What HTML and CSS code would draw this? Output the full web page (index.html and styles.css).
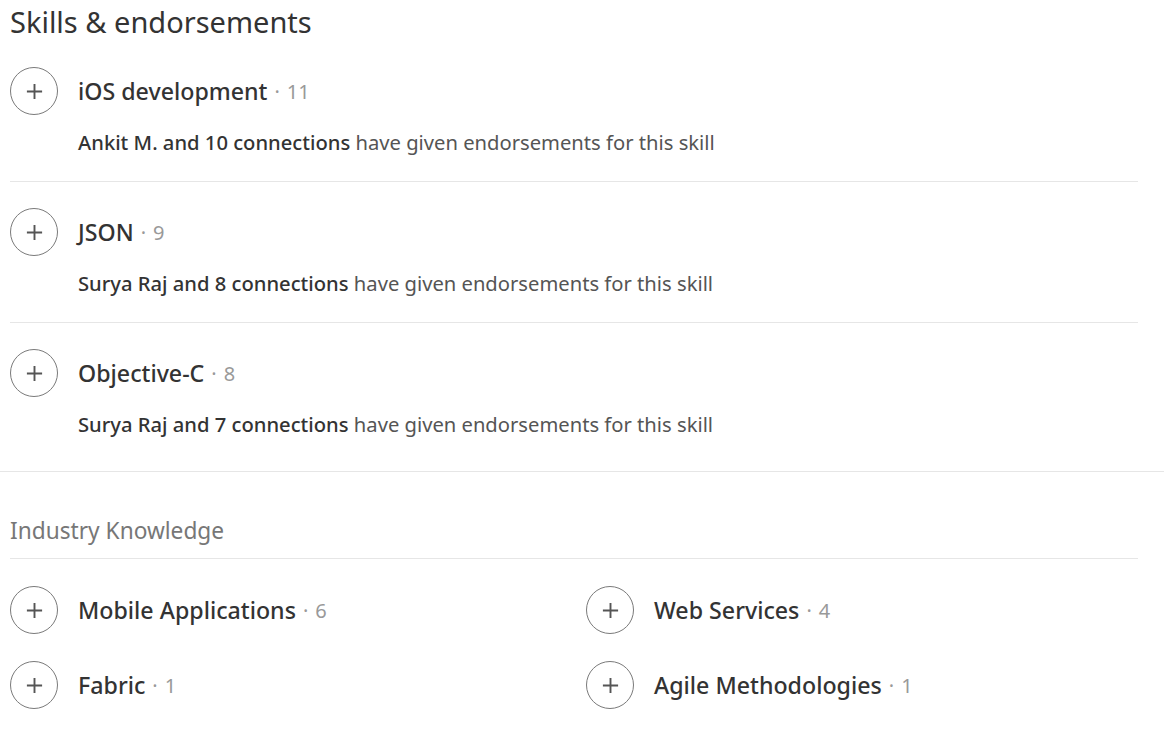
FILE: index.html
```html
<!DOCTYPE html>
<html>
<head>
<meta charset="utf-8">
<link rel="stylesheet" href="styles.css">
</head>
<body>
<section class="skills">
  <h2 class="title">Skills &amp; endorsements</h2>
  <ul class="top-list">
    <li class="skill">
      <div class="skill-head">
        <button class="plus"><svg viewBox="0 0 20 20" width="20" height="20"><path d="M10 2v16M2 10h16" stroke="#555" stroke-width="2" fill="none"/></svg></button>
        <span class="name">iOS development</span><span class="count">·</span><span class="num">11</span>
      </div>
      <p class="desc"><b>Ankit M. and 10 connections</b> have given endorsements for this skill</p>
    </li>
    <li class="skill">
      <div class="skill-head">
        <button class="plus"><svg viewBox="0 0 20 20" width="20" height="20"><path d="M10 2v16M2 10h16" stroke="#555" stroke-width="2" fill="none"/></svg></button>
        <span class="name">JSON</span><span class="count">·</span><span class="num">9</span>
      </div>
      <p class="desc"><b>Surya Raj and 8 connections</b> have given endorsements for this skill</p>
    </li>
    <li class="skill last">
      <div class="skill-head">
        <button class="plus"><svg viewBox="0 0 20 20" width="20" height="20"><path d="M10 2v16M2 10h16" stroke="#555" stroke-width="2" fill="none"/></svg></button>
        <span class="name">Objective-C</span><span class="count">·</span><span class="num">8</span>
      </div>
      <p class="desc"><b>Surya Raj and 7 connections</b> have given endorsements for this skill</p>
    </li>
  </ul>
  <div class="category">
    <h3 class="cat-title">Industry Knowledge</h3>
    <ul class="cat-grid">
      <li class="cat-item">
        <button class="plus"><svg viewBox="0 0 20 20" width="20" height="20"><path d="M10 2v16M2 10h16" stroke="#555" stroke-width="2" fill="none"/></svg></button>
        <span class="name">Mobile Applications</span><span class="count">·</span><span class="num">6</span>
      </li>
      <li class="cat-item">
        <button class="plus"><svg viewBox="0 0 20 20" width="20" height="20"><path d="M10 2v16M2 10h16" stroke="#555" stroke-width="2" fill="none"/></svg></button>
        <span class="name">Web Services</span><span class="count">·</span><span class="num">4</span>
      </li>
      <li class="cat-item">
        <button class="plus"><svg viewBox="0 0 20 20" width="20" height="20"><path d="M10 2v16M2 10h16" stroke="#555" stroke-width="2" fill="none"/></svg></button>
        <span class="name">Fabric</span><span class="count">·</span><span class="num">1</span>
      </li>
      <li class="cat-item">
        <button class="plus"><svg viewBox="0 0 20 20" width="20" height="20"><path d="M10 2v16M2 10h16" stroke="#555" stroke-width="2" fill="none"/></svg></button>
        <span class="name">Agile Methodologies</span><span class="count">·</span><span class="num">1</span>
      </li>
    </ul>
  </div>
</section>
</body>
</html>
```
FILE: styles.css
```css
* { box-sizing: border-box; }
html, body { margin: 0; padding: 0; background: #fff; }
body {
  font-family: "Noto Sans", "Open Sans", sans-serif;
  color: #333;
  width: 1164px;
  height: 744px;
  overflow: hidden;
}
.skills { padding-top: 6px; }
.title {
  margin: 0 0 3px 10px;
  font-size: 29px;
  line-height: 32px;
  font-weight: 400;
  color: #333;
}
ul { list-style: none; margin: 0; padding: 0; }
.top-list { border-bottom: 1px solid #e6e6e6; }
.skill {
  margin: 0 26px 0 10px;
  padding: 26px 0 27px;
  border-bottom: 1px solid #e6e6e6;
}
.skill.last { border-bottom: none; padding-bottom: 35px; }
.skill-head { display: flex; align-items: center; }
.plus {
  flex: none;
  width: 48px;
  height: 48px;
  border-radius: 50%;
  border: 1px solid #7a7a7a;
  background: #fff;
  padding: 0;
  display: flex;
  align-items: center;
  justify-content: center;
  margin-right: 20px;
}
.plus svg { width: 19px; height: 19px; }
.name {
  font-size: 23.2px;
  font-weight: 500;
  color: #333;
  white-space: pre;
}
.count {
  font-size: 20px;
  color: #999;
  margin: 0 7px 0 7px;
}
.num {
  font-size: 20px;
  color: #999;
}
.desc {
  margin: 15px 0 0 68px;
  font-size: 20.2px;
  line-height: 24px;
  color: #555;
  white-space: nowrap;
}
.desc b { font-weight: 500; color: #333; }
.category { margin: 0 26px 0 10px; }
.cat-title {
  margin: 0;
  padding-top: 44px;
  padding-bottom: 12px;
  font-size: 22.7px;
  line-height: 30px;
  font-weight: 400;
  color: #777;
  border-bottom: 1px solid #e6e6e6;
}
.cat-grid {
  display: grid;
  grid-template-columns: 576px 1fr;
  row-gap: 27px;
  padding-top: 27px;
}
.cat-item { display: flex; align-items: center; }
```
